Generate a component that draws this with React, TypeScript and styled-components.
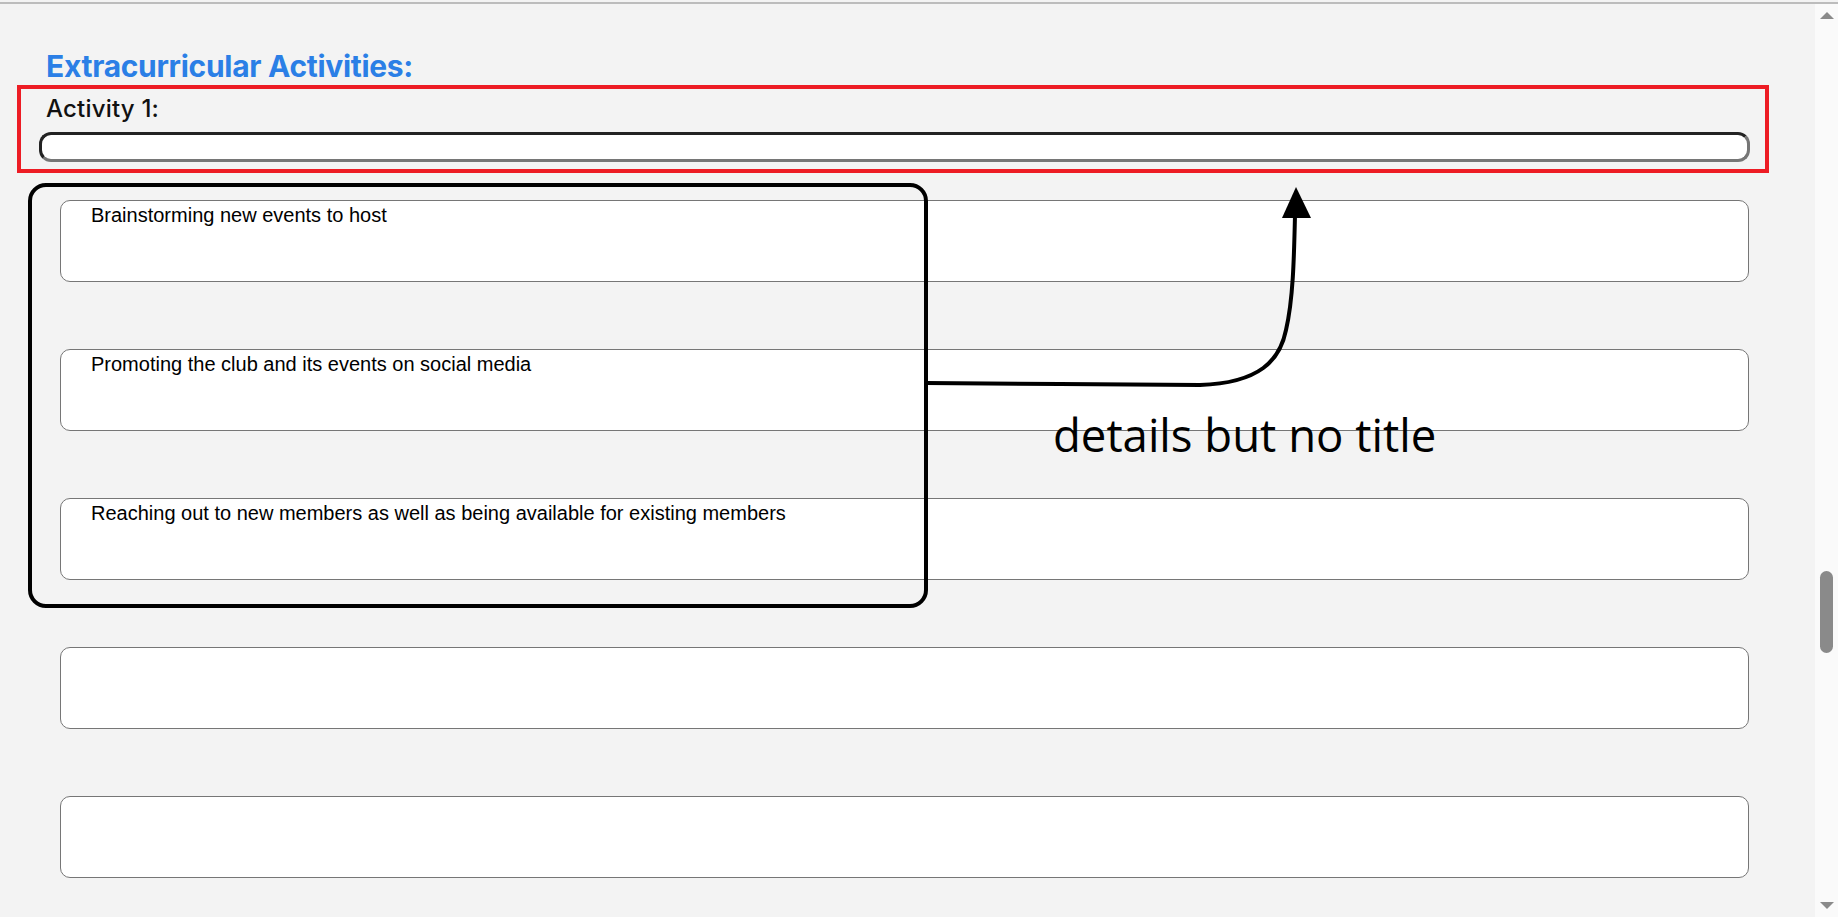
import React from "react";
import styled, { createGlobalStyle } from "styled-components";

const GlobalStyle = createGlobalStyle`
  html, body {
    margin: 0;
    padding: 0;
    background: #f3f3f3;
    overflow: hidden;
  }
`;

const Shell = styled.div`
  position: relative;
  height: 917px;
  padding-top: 2px;
  box-sizing: border-box;
  background: #f3f3f3;
  overflow: hidden;
`;

const Frame = styled.div`
  display: flex;
  height: 100%;
  border-top: 2px solid #bcbcbc;
  box-sizing: border-box;
`;

const Main = styled.main`
  flex: 1;
  padding: 44px 65px 0 39px;
  overflow: hidden;
`;

const Heading = styled.h2`
  margin: 0 0 10px 7px;
  font-family: "Inter", "Liberation Sans", sans-serif;
  font-size: 30px;
  line-height: 36px;
  font-weight: 700;
  letter-spacing: -0.3px;
  color: #2b7fe6;
`;

const FieldLabel = styled.label`
  display: block;
  margin: 0 0 9px 7px;
  font-family: "Inter", "Liberation Sans", sans-serif;
  font-size: 24px;
  line-height: 29px;
  font-weight: 500;
  letter-spacing: 0.2px;
  color: #111;
`;

const TitleInput = styled.input`
  display: block;
  width: 100%;
  height: 30px;
  box-sizing: border-box;
  border-style: solid;
  border-width: 3px;
  border-color: #232323 #767676 #767676 #232323;
  border-radius: 12px;
  background: #fff;
  outline: none;
`;

const DetailList = styled.div`
  display: flex;
  flex-direction: column;
  gap: 67px;
  margin: 38px 1px 0 21px;
`;

const DetailBox = styled.textarea`
  display: block;
  width: 100%;
  height: 82px;
  box-sizing: border-box;
  padding: 3px 30px;
  border: 1px solid #767676;
  border-radius: 10px;
  background: #fff;
  resize: none;
  font-family: "Liberation Sans", Arial, sans-serif;
  font-size: 20px;
  color: #000;
  outline: none;
`;

const Scrollbar = styled.div`
  width: 23px;
  display: flex;
  flex-direction: column;
  align-items: center;
  background: #fafafa;
`;

const Arrow = styled.div<{ $up?: boolean }>`
  width: 0;
  height: 0;
  border-left: 7px solid transparent;
  border-right: 7px solid transparent;
  ${(p) =>
    p.$up
      ? "border-bottom: 7px solid #8a8a8a; margin-top: 8px;"
      : "border-top: 7px solid #8a8a8a; margin-bottom: 8px;"}
`;

const Track = styled.div`
  flex: 1;
`;

const Thumb = styled.div`
  width: 13px;
  height: 82px;
  margin-top: 552px;
  border-radius: 7px;
  background: #8a8a8a;
`;

const Overlay = styled.div`
  position: absolute;
  inset: 0;
  pointer-events: none;
`;

const Outline = styled.div<{ $color: string; $radius: number }>`
  position: absolute;
  box-sizing: border-box;
  border: 4px solid ${(p) => p.$color};
  border-radius: ${(p) => p.$radius}px;
`;

const Note = styled.div`
  position: absolute;
  left: 1053px;
  top: 404px;
  font-family: "Open Sans", sans-serif;
  font-size: 45.5px;
  line-height: 60px;
  color: #000;
  white-space: nowrap;
`;

const details = [
  "Brainstorming new events to host",
  "Promoting the club and its events on social media",
  "Reaching out to new members as well as being available for existing members",
  "",
  "",
];

export default function App() {
  return (
    <Shell>
      <GlobalStyle />
      <Frame>
        <Main>
          <Heading>Extracurricular Activities:</Heading>
          <FieldLabel>Activity 1:</FieldLabel>
          <TitleInput type="text" />
          <DetailList>
            {details.map((d, i) => (
              <DetailBox key={i} defaultValue={d} />
            ))}
          </DetailList>
        </Main>
        <Scrollbar>
          <Arrow $up />
          <Track>
            <Thumb />
          </Track>
          <Arrow />
        </Scrollbar>
      </Frame>
      <Overlay>
        <Outline
          $color="#ed1c24"
          $radius={0}
          style={{ left: 17, top: 85, width: 1752, height: 88 }}
        />
        <Outline
          $color="#000"
          $radius={18}
          style={{ left: 28, top: 183, width: 900, height: 425 }}
        />
        <svg
          width="1838"
          height="917"
          style={{ position: "absolute", left: 0, top: 0 }}
        >
          <path
            d="M926 383 L1060 384 L1200 385 C1260 383 1280 360 1286 330 C1293 300 1294 260 1295 215"
            fill="none"
            stroke="#000"
            strokeWidth="4"
          />
          <polygon points="1296,187 1282,218 1311,218" fill="#000" />
        </svg>
        <Note>details but no title</Note>
      </Overlay>
    </Shell>
  );
}
